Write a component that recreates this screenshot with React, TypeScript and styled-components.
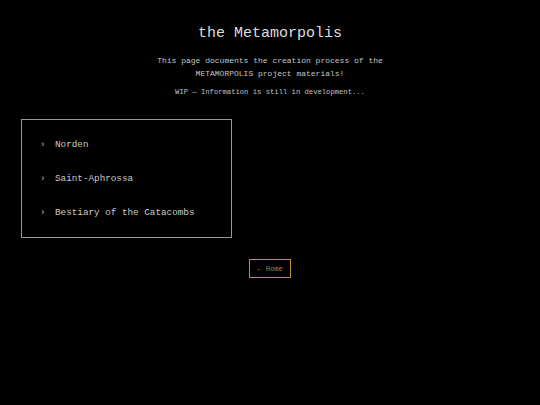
import styled, { createGlobalStyle } from "styled-components"

const GlobalStyle = createGlobalStyle`
html, body {
    margin: 0;
    padding: 0;
    background: #000;
}
body {
    font-family: "Liberation Mono", "Courier New", monospace;
    color: #d0d0d0;
}
`

const Page = styled.div`
min-height: 405px;
background: #000;
display: flex;
flex-direction: column;
padding: 25px 21px 0;
box-sizing: border-box;
`

const Header = styled.header`
display: flex;
flex-direction: column;
align-items: center;
text-align: center;
`

const Title = styled.h1`
margin: 0;
font-size: 15px;
line-height: 18px;
font-weight: normal;
color: #dedede;
`

const Intro = styled.p`
margin: 10.5px 0 0;
font-size: 8px;
line-height: 13px;
color: #c4c4c4;
`

const Note = styled.p`
margin: 6px 0 0;
font-size: 7.2px;
line-height: 13px;
color: #c0c0c0;
`

const Grid = styled.section`
display: grid;
grid-template-columns: 211px 1fr;
margin-top: 20.5px;
`

const Panel = styled.ul`
list-style: none;
margin: 0;
padding: 18px 18px 17px;
border: 1px solid #9a9a9a;
display: flex;
flex-direction: column;
gap: 20px;
`

const Entry = styled.li`
display: flex;
align-items: center;
gap: 11px;
font-size: 9.3px;
line-height: 14px;
color: #cacaca;
`

const Chevron = styled.span`
width: 4px;
font-size: 9px;
color: #c4c4c4;
`

const Footer = styled.div`
display: flex;
justify-content: center;
margin-top: 21px;
`

const HomeButton = styled.a`
display: inline-flex;
align-items: center;
justify-content: center;
width: 42px;
height: 19px;
box-sizing: border-box;
border: 1px solid #c18d3f;
font-size: 7px;
color: #b58540;
text-decoration: none;
`

const entries = ["Norden", "Saint-Aphrossa", "Bestiary of the Catacombs"]

export default function App() {
    return (
        <>
            <GlobalStyle />
            <Page>
                <Header>
                    <Title>the Metamorpolis</Title>
                    <Intro>
                        This page documents the creation process of the
                        <br />
                        METAMORPOLIS project materials!
                    </Intro>
                    <Note>WIP — Information is still in development...</Note>
                </Header>
                <Grid>
                    <Panel>
                        {entries.map((e) => (
                            <Entry key={e}>
                                <Chevron>›</Chevron>
                                {e}
                            </Entry>
                        ))}
                    </Panel>
                </Grid>
                <Footer>
                    <HomeButton href="#">← Home</HomeButton>
                </Footer>
            </Page>
        </>
    )
}
